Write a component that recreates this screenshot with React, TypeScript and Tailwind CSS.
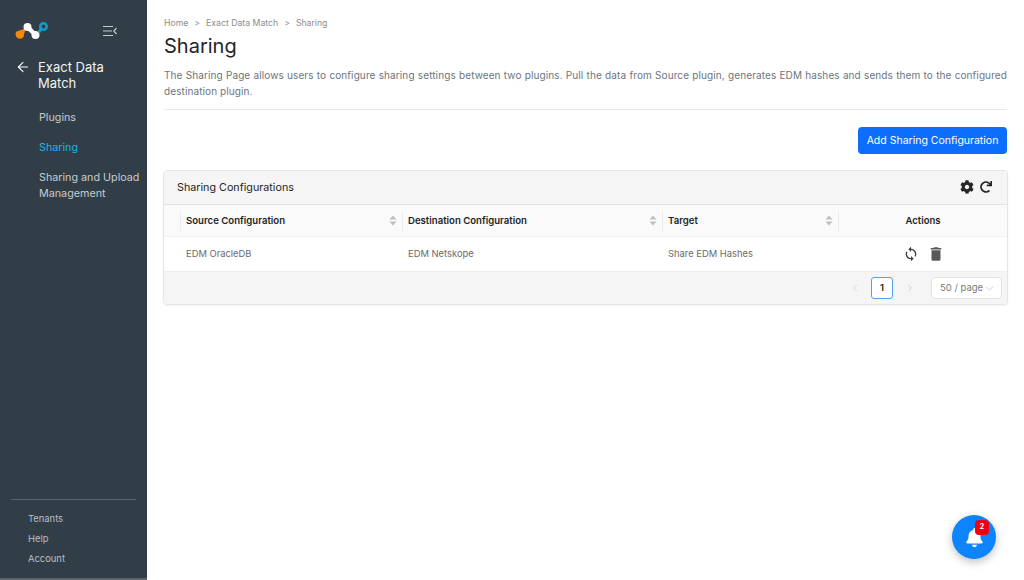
import { FaBell, FaCog, FaRedo } from "react-icons/fa";
import { MdSync, MdDelete } from "react-icons/md";
import { ArrowLeft, ChevronLeft, ChevronRight, ChevronDown } from "lucide-react";

function Sort() {
  return (
    <svg width="8" height="11" viewBox="0 0 8 11" className="shrink-0">
      <path d="M4 0.5 L7.5 4.5 H0.5 Z" fill="#bfbfbf" />
      <path d="M4 10.5 L7.5 6.5 H0.5 Z" fill="#bfbfbf" />
    </svg>
  );
}

function Logo() {
  return (
    <svg width="36" height="22" viewBox="0 0 36 22">
      <path d="M11.5 8.5 L9.5 17 A4.4 4.4 0 1 1 2.5 11.5 Z" fill="#f5870a" />
      <path d="M13.5 7 L21.5 15" stroke="#ffffff" strokeWidth="4.5" />
      <circle cx="13.5" cy="7" r="4" fill="#ffffff" />
      <circle cx="21.5" cy="15" r="4" fill="#ffffff" />
      <path d="M24.5 12.5 L27.5 8.5" stroke="#0f9fc6" strokeWidth="3" />
      <circle cx="29.5" cy="6.5" r="3.2" fill="none" stroke="#0f9fc6" strokeWidth="2.6" />
    </svg>
  );
}

function MenuCollapse() {
  return (
    <svg width="14" height="12" viewBox="0 0 14 12" fill="none" stroke="#c3c8cc" strokeWidth="1.2">
      <path d="M0 1.5H10M0 6H9M0 10.5H10" />
      <path d="M13.5 3L10.8 6L13.5 9" />
    </svg>
  );
}

const columns = "grid grid-cols-[16px_222px_260px_176px_1fr]";

function Head({ label }: { label: string }) {
  return (
    <div className="flex items-center justify-between pl-[5px] pr-[5px] border-l border-[#ececec] h-[20px]">
      <span className="mt-[1px] text-[9.6px] font-semibold text-[#1f1f1f]">{label}</span>
      <Sort />
    </div>
  );
}

export default function App() {
  return (
    <div className="flex h-[580px] w-[1024px] bg-white overflow-hidden font-['Inter',sans-serif]">
      <aside className="flex w-[147px] shrink-0 flex-col bg-[#313e48] border-b-2 border-[#5a656d]">
        <div className="flex items-center pl-[14px] pt-[20px] h-[42px]">
          <Logo />
          <div className="ml-[53px] mt-[-1px]"><MenuCollapse /></div>
        </div>
        <div className="flex items-start pl-[15px] mt-[17px]">
          <ArrowLeft size={16} strokeWidth={1.6} color="#ffffff" />
          <div className="ml-[7px] text-[13px] leading-[16px] text-[#f1f2f3]">Exact Data<br />Match</div>
        </div>
        <nav className="mt-[19px] flex flex-col pl-[39px] text-[10.75px] text-[#c6cbcf]">
          <a className="leading-[16px]">Plugins</a>
          <a className="mt-[14px] leading-[16px] text-[#1cb4e3]">Sharing</a>
          <a className="mt-[14px] leading-[16px]">Sharing and Upload Management</a>
        </nav>
        <div className="mt-auto mx-[11px] border-t border-[#5a656d] pt-[13px] pb-[13px] pl-[17px] flex flex-col gap-[8px] text-[9.4px] leading-[12px] text-[#b9bfc3]">
          <span>Tenants</span>
          <span>Help</span>
          <span>Account</span>
        </div>
      </aside>

      <main className="relative flex-1 pl-[17px] pr-[17px] pt-[17px]">
        <div className="flex items-center gap-[6px] text-[8.7px] leading-[12px] text-[#8c8c8c]">
          <span>Home</span><span>&gt;</span><span>Exact Data Match</span><span>&gt;</span><span>Sharing</span>
        </div>
        <h1 className="mt-[5px] text-[20px] leading-[24px] font-normal text-[#212529]">Sharing</h1>
        <p className="mt-[9px] text-[10px] leading-[16px] tracking-[0.1px] text-[#6c757d] text-justify">
          The Sharing Page allows users to configure sharing settings between two plugins. Pull the data from Source plugin, generates EDM hashes and sends them to the configured destination plugin.
        </p>
        <div className="mt-[10px] border-t border-[#e9e9e9]" />
        <div className="mt-[17px] flex justify-end">
          <button className="h-[27px] w-[149px] rounded-[4px] bg-[#0d6efd] text-[10.5px] text-white">Add Sharing Configuration</button>
        </div>
        <section className="mt-[16px] -ml-px -mr-px rounded-[4px] border border-[#e5e5e5] shadow-[0_1px_2px_rgba(0,0,0,0.05)] overflow-hidden">
          <div className="flex h-[34px] items-center justify-between bg-[#f5f5f5] border-b border-[#e3e3e3] pl-[13px] pr-[15px]">
            <span className="mt-[2px] text-[10.75px] text-[#262626]">Sharing Configurations</span>
            <div className="mt-[-1px] flex items-center gap-[6px]">
              <FaCog size={14} color="#262626" />
              <FaRedo size={12} color="#262626" />
            </div>
          </div>
          <div className={`${columns} h-[32px] items-center bg-[#fafafa] border-b border-[#f0f0f0]`}>
            <div />
            <Head label="Source Configuration" />
            <Head label="Destination Configuration" />
            <Head label="Target" />
            <div className="flex items-center justify-center border-l border-[#ececec] h-[20px] pt-[1px] text-[9.5px] font-semibold text-[#1f1f1f]">Actions</div>
          </div>
          <div className={`${columns} h-[34px] items-center text-[9.4px] text-[#6b6b6b] bg-white`}>
            <div />
            <div className="pl-[6px]">EDM OracleDB</div>
            <div className="pl-[6px]">EDM Netskope</div>
            <div className="pl-[6px]">Share EDM Hashes</div>
            <div className="flex items-center pl-[65px] gap-[8px]">
              <MdSync size={16} color="#404040" />
              <MdDelete size={18} color="#595959" />
            </div>
          </div>
          <div className="flex h-[33px] items-center justify-end bg-[#f5f5f5] border-t border-[#eeeeee] pr-[5px]">
            <ChevronLeft size={10} color="#c4c4c4" />
            <span className="ml-[11px] flex h-[22px] w-[22px] items-center justify-center rounded-[3px] border border-[#4f9cf9] bg-white text-[9.5px] font-semibold text-[#262626]">1</span>
            <ChevronRight size={10} color="#c4c4c4" className="ml-[12px]" />
            <span className="ml-[16px] flex h-[22px] w-[71px] items-center justify-between whitespace-nowrap rounded-[4px] border border-[#e2e2e2] bg-white pl-[8px] pr-[5px] pt-[1px] text-[9.5px] text-[#7a7a7a]">
              50 / page <ChevronDown size={13} strokeWidth={1.5} color="#c4c4c4" className="shrink-0" />
            </span>
          </div>
        </section>

        <div className="absolute left-[805px] top-[515px] flex h-[44px] w-[44px] items-center justify-center rounded-full bg-[#0d84fd] shadow-[0_3px_8px_rgba(0,0,0,0.25)]">
          <FaBell size={19} color="#ffffff" />
          <span className="absolute left-[23px] top-[5px] flex h-[15px] w-[14px] items-center justify-center rounded-[4px] bg-[#f0000f] text-[7px] font-bold text-white">2</span>
        </div>
      </main>
    </div>
  );
}
